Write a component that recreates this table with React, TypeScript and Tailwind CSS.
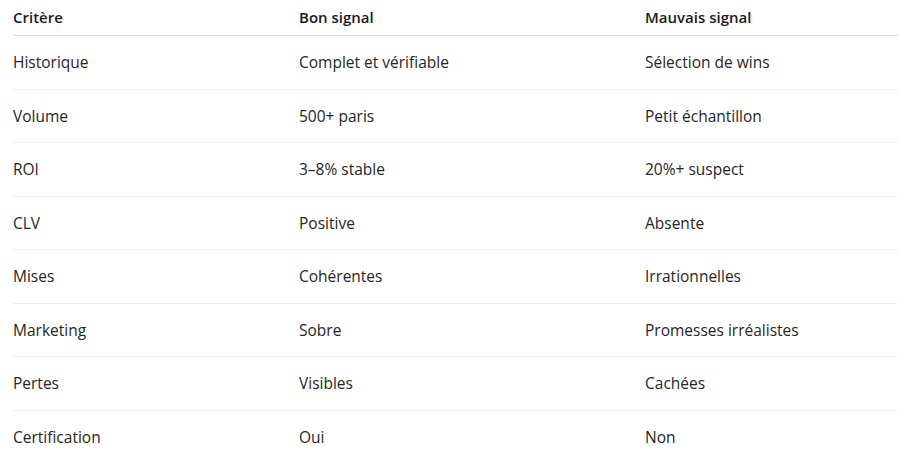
const rows = [
  ["Historique", "Complet et vérifiable", "Sélection de wins"],
  ["Volume", "500+ paris", "Petit échantillon"],
  ["ROI", "3–8% stable", "20%+ suspect"],
  ["CLV", "Positive", "Absente"],
  ["Mises", "Cohérentes", "Irrationnelles"],
  ["Marketing", "Sobre", "Promesses irréalistes"],
  ["Pertes", "Visibles", "Cachées"],
  ["Certification", "Oui", "Non"],
];

export default function App() {
  return (
    <div className="w-[900px] h-[474px] bg-white pl-[13px] pr-[2px] font-['Open_Sans',sans-serif] text-[15.5px] text-[#262626]">
      <div className="grid grid-cols-[286px_346px_1fr] h-[36px] items-center border-b border-[#dcdcdc] text-[15px] font-semibold text-[#1a1a1a]">
        <div>Critère</div>
        <div>Bon signal</div>
        <div>Mauvais signal</div>
      </div>
      {rows.map((r, i) => (
        <div
          key={i}
          className={`grid grid-cols-[286px_346px_1fr] h-[53.5px] items-center pt-px ${i < rows.length - 1 ? "border-b border-[#efefef]" : ""}`}
        >
          <div>{r[0]}</div>
          <div>{r[1]}</div>
          <div>{r[2]}</div>
        </div>
      ))}
    </div>
  );
}
